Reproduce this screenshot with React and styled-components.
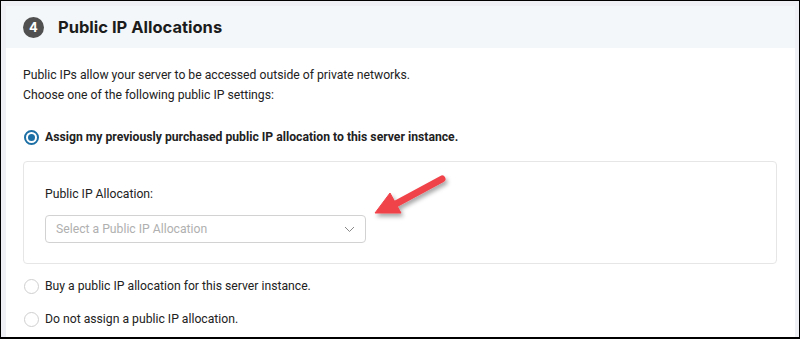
import React from "react";
import styled, { createGlobalStyle } from "styled-components";

const GlobalStyle = createGlobalStyle`
  html, body {
    margin: 0;
    padding: 0;
    background: #ffffff;
  }
  * {
    box-sizing: border-box;
  }
`;

const Frame = styled.div`
  width: 800px;
  height: 339px;
  border: 1px solid #000;
  border-bottom-width: 2px;
  background: #eef0f6;
  padding: 5px 4px 0 5px;
  overflow: hidden;
`;

const Card = styled.section`
  position: relative;
  height: 100%;
  background: #fff;
  font-family: Roboto, "Liberation Sans", sans-serif;
  color: #222;
`;

const Header = styled.header`
  display: flex;
  align-items: center;
  gap: 14px;
  height: 42px;
  padding: 0 0 0 17px;
  background: #f4f7f9;
`;

const StepBadge = styled.span`
  display: flex;
  align-items: center;
  justify-content: center;
  width: 21px;
  height: 21px;
  border-radius: 50%;
  background: #505050;
  color: #fff;
  font-family: Inter, "Open Sans", sans-serif;
  font-weight: 700;
  font-size: 13px;
`;

const Title = styled.h2`
  margin: 0;
  font-family: Inter, "Open Sans", sans-serif;
  font-weight: 700;
  font-size: 16.5px;
  color: #1c1c1c;
`;

const Body = styled.div`
  padding: 17px 0 0 17px;
  font-size: 12.2px;
`;

const Intro = styled.p`
  margin: 0;
  line-height: 20px;
`;

const Options = styled.div`
  display: flex;
  flex-direction: column;
  margin-top: 22px;
`;

const Option = styled.label`
  display: flex;
  align-items: center;
  gap: 6px;
  height: 20px;
  font-weight: ${p => (p.$bold ? 700 : 400)};
  margin-bottom: ${p => p.$gap || 0}px;
`;

const Radio = styled.span`
  width: 15px;
  height: 15px;
  border-radius: 50%;
  margin-left: 1px;
  border: ${p => (p.$checked ? "2px solid #1c6fa5" : "1px solid #cfcfcf")};
  display: flex;
  align-items: center;
  justify-content: center;
  background: #fff;

  &::after {
    content: "";
    display: ${p => (p.$checked ? "block" : "none")};
    width: 7px;
    height: 7px;
    border-radius: 50%;
    background: #1c6fa5;
  }
`;

const SubPanel = styled.div`
  width: 754px;
  height: 103px;
  border: 1px solid #e6e6e6;
  border-radius: 4px;
  padding: 22px 0 0 21px;
  margin-bottom: 12px;
`;

const FieldLabel = styled.div`
  line-height: 20px;
  margin-bottom: 11px;
`;

const Select = styled.div`
  display: flex;
  align-items: center;
  justify-content: space-between;
  width: 321px;
  height: 28px;
  border: 1px solid #d2d2d2;
  border-radius: 4px;
  padding: 0 10px;
  color: #b0b0b0;
`;

const Overlay = styled.svg`
  position: absolute;
  left: 354px;
  top: 160px;
  overflow: visible;
  pointer-events: none;
`;

const Chevron = () => (
  <svg width="11" height="7" viewBox="0 0 11 7">
    <path d="M1 1 L5.5 5.5 L10 1" fill="none" stroke="#888" strokeWidth="1" />
  </svg>
);

const Arrow = () => (
  <Overlay width="100" height="70">
    <defs>
      <filter id="sh" x="-30%" y="-30%" width="160%" height="160%">
        <feDropShadow dx="2" dy="3" stdDeviation="2" floodColor="#000" floodOpacity="0.35" />
      </filter>
    </defs>
    <g filter="url(#sh)" fill="#f0434a" stroke="#f0434a">
      <line x1="82" y1="13" x2="32" y2="40" strokeWidth="7" strokeLinecap="round" />
      <polygon points="15,47 30,27 41,47" strokeWidth="1" strokeLinejoin="round" />
    </g>
  </Overlay>
);

export default function App() {
  return (
    <>
      <GlobalStyle />
      <Frame>
        <Card>
          <Header>
            <StepBadge>4</StepBadge>
            <Title>Public IP Allocations</Title>
          </Header>
          <Body>
            <Intro>Public IPs allow your server to be accessed outside of private networks.</Intro>
            <Intro>Choose one of the following public IP settings:</Intro>
            <Options>
              <Option $bold $gap={14}>
                <Radio $checked />
                Assign my previously purchased public IP allocation to this server instance.
              </Option>
              <SubPanel>
                <FieldLabel>Public IP Allocation:</FieldLabel>
                <Select>
                  <span>Select a Public IP Allocation</span>
                  <Chevron />
                </Select>
              </SubPanel>
              <Option $gap={13}>
                <Radio />
                Buy a public IP allocation for this server instance.
              </Option>
              <Option>
                <Radio />
                Do not assign a public IP allocation.
              </Option>
            </Options>
          </Body>
          <Arrow />
        </Card>
      </Frame>
    </>
  );
}
